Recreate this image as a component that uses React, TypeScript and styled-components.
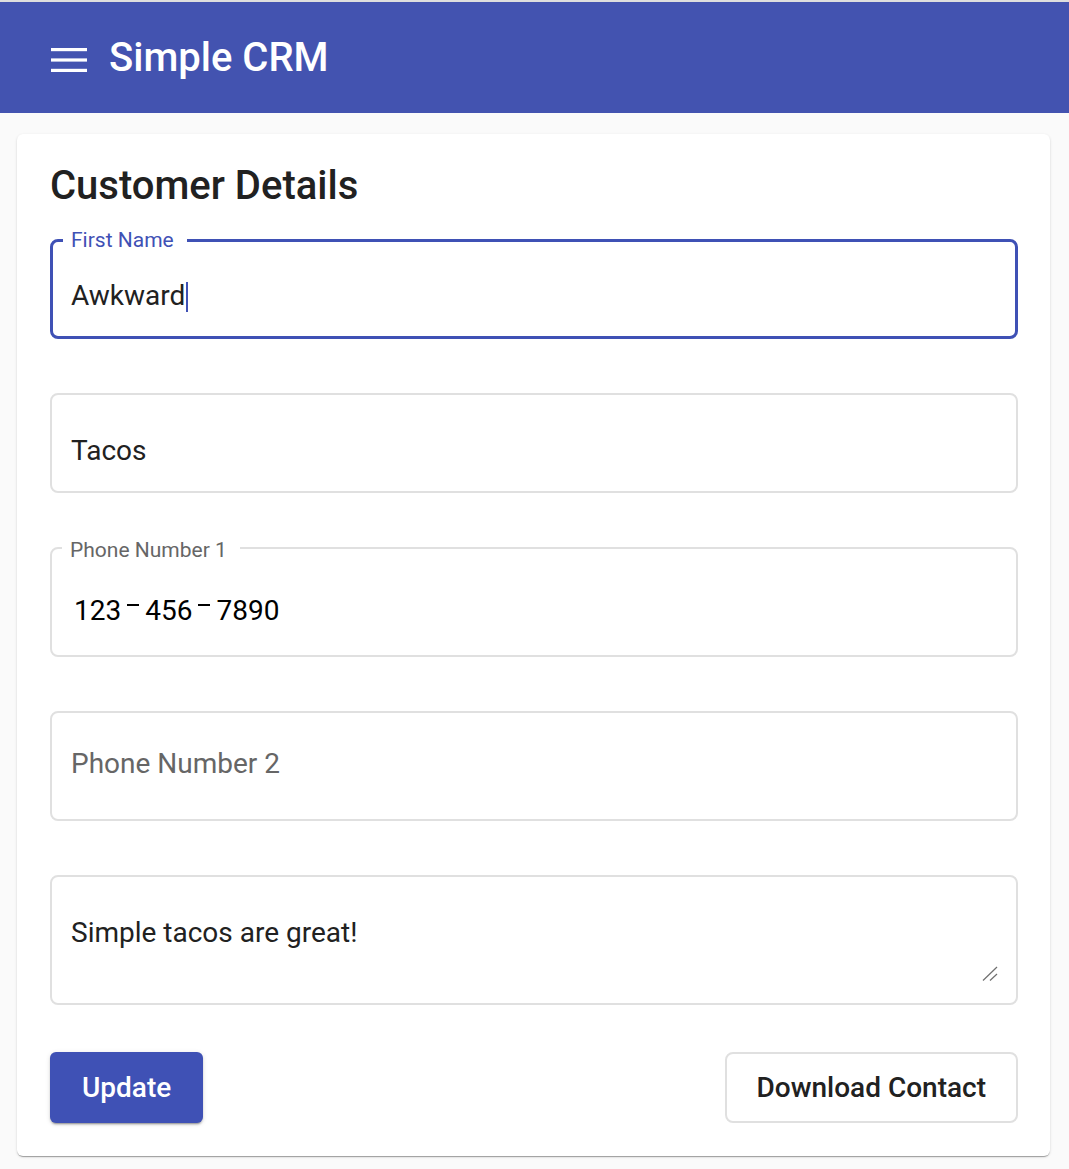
import React from "react";
import styled, { createGlobalStyle } from "styled-components";

const GlobalStyle = createGlobalStyle`
  html, body { margin: 0; padding: 0; background: #fafafa; }
  body { font-family: Roboto, "Liberation Sans", Arial, sans-serif; }
  *, *::before, *::after { box-sizing: border-box; }
`;

const Page = styled.div`
  border-top: 2px solid #dedede;
  min-height: 1169px;
  background: #fafafa;
`;

const AppBar = styled.header`
  height: 111px;
  background: #4353b0;
  display: flex;
  align-items: center;
  padding-left: 51px;
  gap: 22px;
`;

const MenuIcon = styled.svg`
  width: 36px;
  height: 24px;
  margin-top: 4px;
  flex: none;
`;

const Title = styled.h1`
  margin: 0;
  font-size: 40px;
  line-height: 40px;
  font-weight: 500;
  color: #ffffff;
`;

const Card = styled.main`
  margin: 21px 19px 0 17px;
  background: #ffffff;
  border-radius: 6px;
  box-shadow: 0 2px 1px -1px rgba(0, 0, 0, 0.2), 0 1px 1px 0 rgba(0, 0, 0, 0.14),
    0 1px 3px 0 rgba(0, 0, 0, 0.12);
  padding: 32px 32px 33px 33px;
`;

const Heading = styled.h2`
  margin: 0 0 33px;
  font-size: 40px;
  line-height: 40px;
  font-weight: 500;
  color: #212121;
`;

const Fields = styled.div`
  display: flex;
  flex-direction: column;
  gap: 54px;
`;

const FieldBox = styled.div<{ $focused?: boolean; $pt: number; $pb: number; $pl?: number; $pr?: number }>`
  position: relative;
  border: ${(p) => (p.$focused ? "3px solid #3f51b5" : "2px solid #e0e0e0")};
  border-radius: 8px;
  padding: ${(p) => `${p.$pt}px ${p.$pr ?? 18}px ${p.$pb}px ${p.$pl ?? 18}px`};
`;

const FieldLabel = styled.label<{ $focused?: boolean }>`
  position: absolute;
  top: ${(p) => (p.$focused ? "-12px" : "-9px")};
  left: 10px;
  padding: 0 13px 0 8px;
  background: #ffffff;
  font-size: 21px;
  line-height: 20px;
  color: ${(p) => (p.$focused ? "#3f51b5" : "#666666")};
  white-space: nowrap;
`;

const TextInput = styled.input`
  display: block;
  width: 100%;
  height: 32px;
  padding: 0;
  border: none;
  outline: none;
  background: transparent;
  font-family: Roboto, "Liberation Sans", Arial, sans-serif;
  font-size: 28px;
  line-height: 32px;
  color: #212121;
  &::placeholder {
    color: #666666;
    opacity: 1;
  }
`;

const ValueLine = styled.div<{ $dark?: boolean }>`
  height: 32px;
  font-size: 28px;
  line-height: 32px;
  white-space: nowrap;
  color: ${(p) => (p.$dark ? "#000000" : "#212121")};
`;

const Dash = styled.span`
  display: inline-block;
  width: 12px;
  height: 2px;
  margin: 0 6px 0 6px;
  background: #000000;
  vertical-align: 14px;
`;

const Caret = styled.span`
  display: inline-block;
  width: 2px;
  height: 30px;
  margin-left: 1px;
  background: #3f51b5;
  vertical-align: -7px;
`;

const TextArea = styled.textarea`
  display: block;
  width: 100%;
  height: 65px;
  padding: 0;
  border: none;
  outline: none;
  resize: none;
  background: transparent;
  font-family: Roboto, "Liberation Sans", Arial, sans-serif;
  font-size: 28px;
  line-height: 32px;
  color: #212121;
`;

const ResizeGrip = styled.svg`
  position: absolute;
  right: 18px;
  bottom: 21px;
  width: 16px;
  height: 16px;
  pointer-events: none;
`;

const Actions = styled.div`
  display: flex;
  justify-content: space-between;
  align-items: center;
  margin-top: 47px;
`;

const Button = styled.button<{ $variant: "contained" | "outlined" }>`
  height: 71px;
  font-family: Roboto, "Liberation Sans", Arial, sans-serif;
  font-size: 28px;
  font-weight: 500;
  cursor: pointer;
  border-radius: ${(p) => (p.$variant === "contained" ? "6px" : "8px")};
  padding: 0 ${(p) => (p.$variant === "contained" ? "32px" : "30px")};
  background: ${(p) => (p.$variant === "contained" ? "#3f51b5" : "#ffffff")};
  color: ${(p) => (p.$variant === "contained" ? "#ffffff" : "#212121")};
  border: ${(p) => (p.$variant === "contained" ? "none" : "2px solid #e0e0e0")};
  box-shadow: ${(p) =>
    p.$variant === "contained"
      ? "0 3px 1px -2px rgba(0,0,0,0.2), 0 2px 2px 0 rgba(0,0,0,0.14), 0 1px 5px 0 rgba(0,0,0,0.12)"
      : "none"};
`;

export default function App() {
  return (
    <Page>
      <GlobalStyle />
      <AppBar>
        <MenuIcon viewBox="0 0 36 24" aria-label="menu">
          <rect x="0" y="0" width="36" height="3.2" fill="#ffffff" />
          <rect x="0" y="10.4" width="36" height="3.2" fill="#ffffff" />
          <rect x="0" y="20.8" width="36" height="3.2" fill="#ffffff" />
        </MenuIcon>
        <Title>Simple CRM</Title>
      </AppBar>
      <Card>
        <Heading>Customer Details</Heading>
        <Fields>
          <FieldBox $focused $pt={38} $pb={24} $pl={18}>
            <FieldLabel $focused>First Name</FieldLabel>
            <ValueLine>
              Awkward
              <Caret />
            </ValueLine>
          </FieldBox>
          <FieldBox $pt={40} $pb={24} $pl={19}>
            <TextInput defaultValue="Tacos" aria-label="Last Name" />
          </FieldBox>
          <FieldBox $pt={46} $pb={28} $pl={22}>
            <FieldLabel>Phone Number 1</FieldLabel>
            <ValueLine $dark>
              123<Dash />456<Dash />7890
            </ValueLine>
          </FieldBox>
          <FieldBox $pt={35} $pb={39} $pl={19}>
            <TextInput placeholder="Phone Number 2" />
          </FieldBox>
          <FieldBox $pt={40} $pb={21} $pl={19} $pr={16}>
            <TextArea defaultValue="Simple tacos are great!" aria-label="Notes" />
            <ResizeGrip viewBox="0 0 16 16">
              <line x1="1" y1="14.5" x2="15" y2="1" stroke="#6f6f6f" strokeWidth="1.2" />
              <line x1="8" y1="14.5" x2="15" y2="8" stroke="#6f6f6f" strokeWidth="1.2" />
            </ResizeGrip>
          </FieldBox>
        </Fields>
        <Actions>
          <Button $variant="contained">Update</Button>
          <Button $variant="outlined">Download Contact</Button>
        </Actions>
      </Card>
    </Page>
  );
}
